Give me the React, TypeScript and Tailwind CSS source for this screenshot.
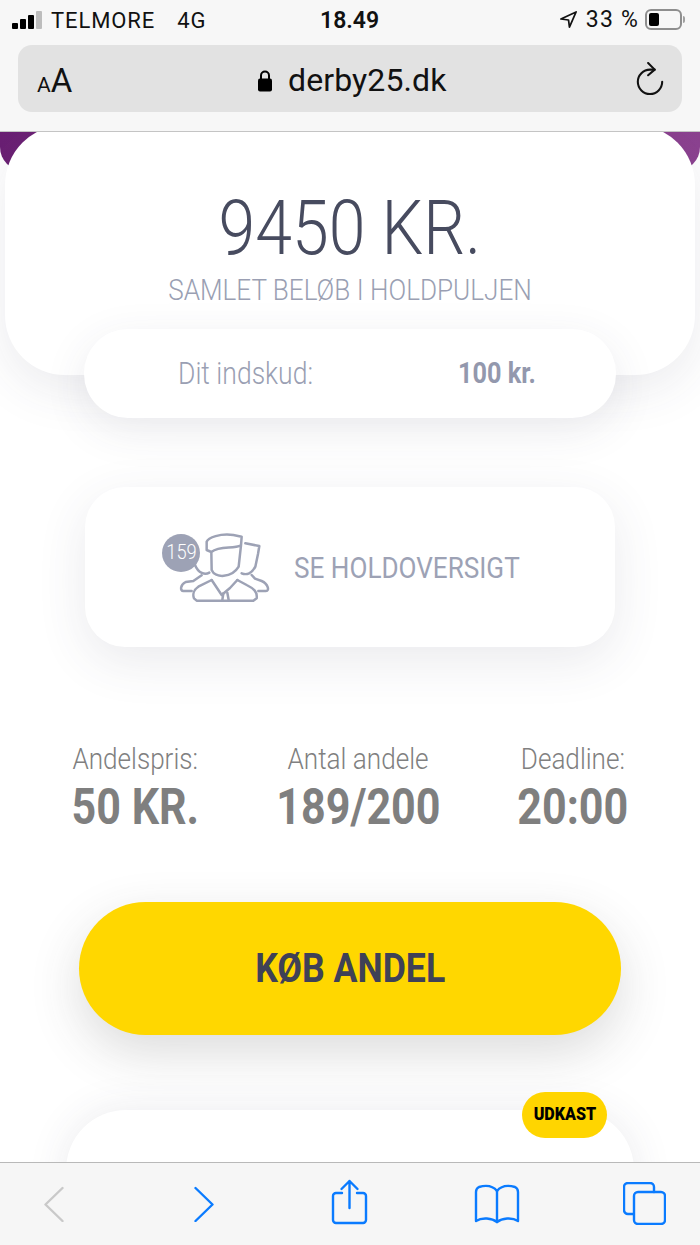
function Cond({ className, children }: { className?: string; children: React.ReactNode }) {
  return <span className={`inline-block whitespace-nowrap origin-center scale-x-[0.87] ${className ?? ""}`}>{children}</span>;
}

function TeamIcon() {
  return (
    <svg viewBox="0 0 480 330" className="w-[160px] h-[110px] shrink-0" fill="none" stroke="#9da2b5" strokeWidth="7.5" strokeLinecap="round" strokeLinejoin="round">
      {/* back right */}
      <path d="M316 100 L358 108 L354 132 L346 170 C336 190 320 196 305 190" />
      <path d="M335 195 L345 206 L365 213 C385 222 389 243 378 243 L355 243" />
      {/* back left */}
      <path d="M165 165 C175 190 195 196 208 188" />
      <path d="M185 196 L160 213 L137 216 C120 225 120 243 130 243 L155 243" />
      {/* front */}
      <path d="M214 126 L200 120 L200 95 C205 82 240 70 280 75 L305 80 L303 106 L296 170 C275 205 225 205 215 180 L214 126 C240 106 280 118 303 106" />
      <path d="M215 210 L175 230 C160 240 158 255 162 265 L170 272 L340 272 L350 265 C353 245 340 235 320 225 L292 210" />
      <path d="M215 210 L245 255 L270 234 L292 210" />
      <path d="M250 250 L247 270 M262 248 L266 270" />
    </svg>
  );
}

function Stat({ label, value }: { label: string; value: string }) {
  return (
    <div className="flex flex-col items-center">
      <Cond className="text-[30px] leading-[34px] font-light text-[#808080]">{label}</Cond>
      <Cond className="text-[49.5px] leading-[56px] mt-[3px] font-bold text-[#7f7f7f]">{value}</Cond>
    </div>
  );
}

export default function App() {
  return (
    <div className="w-[700px] h-[1245px] flex flex-col overflow-hidden bg-white font-['Roboto',sans-serif]">
      {/* safari top */}
      <div className="h-[132px] shrink-0 bg-[#f7f7f7] border-b border-[#c4c4c4] text-[#111]">
        <div className="h-[39px] px-3 flex items-center justify-between relative">
          <div className="flex items-center">
            <div className="flex items-end gap-[2px] h-[18px]">
              <div className="w-[6px] h-[6px] bg-black rounded-[1px]" />
              <div className="w-[6px] h-[10px] bg-black rounded-[1px]" />
              <div className="w-[6px] h-[14px] bg-black rounded-[1px]" />
              <div className="w-[6px] h-[18px] bg-[#bdbdbd] rounded-[1px]" />
            </div>
            <span className="ml-[9px] mt-[1px] text-[22px] tracking-[0.9px]">TELMORE</span>
            <span className="ml-[22px] mt-[1px] text-[22px] tracking-[1px]">4G</span>
          </div>
          <span className="absolute left-[320px] top-[4px] text-[23px] font-semibold">18.49</span>
          <div className="flex items-center pr-[3px]">
            <svg viewBox="0 0 20 20" className="w-[19px] h-[19px]" fill="none" stroke="#111" strokeWidth="1.8" strokeLinejoin="round">
              <path d="M18 2 L2 9.5 L10 10.5 L11 18 Z" />
            </svg>
            <span className="ml-[8px] mt-[2px] text-[23px] tracking-[1.2px]">33 %</span>
            <div className="ml-[6px] w-[37px] h-[21px] border-2 border-[#8e8e8e] rounded-[6px] p-[2px]">
              <div className="w-[10px] h-full bg-black rounded-[2px]" />
            </div>
            <div className="ml-[1px] w-[2px] h-[7px] bg-[#a0a0a0] rounded-r" />
          </div>
        </div>
        <div className="mx-[18px] mt-[6px] h-[67px] bg-[#e2e2e2] rounded-[14px] flex items-center justify-between pl-[19px] pr-[17px] relative">
          <div className="flex items-baseline mt-[3px]">
            <span className="text-[21px] leading-none">A</span>
            <span className="text-[33px] leading-none">A</span>
          </div>
          <div className="absolute left-[239px] top-[15px] flex items-center gap-[15px]">
            <svg viewBox="0 0 16 24" className="w-[16px] h-[25px]" fill="none">
              <path d="M4 11 V7 a4 4 0 0 1 8 0 V11" stroke="#000" strokeWidth="2" />
              <rect x="1" y="10" width="14" height="13" rx="2" fill="#000" />
            </svg>
            <span className="text-[32px] leading-[40px] tracking-[0.1px]">derby25.dk</span>
          </div>
          <svg viewBox="0 0 32 36" className="w-[30px] h-[34px]" fill="none" stroke="#111" strokeWidth="2.2" strokeLinecap="round" strokeLinejoin="round">
            <path d="M21 8 L16 8 A13 13 0 1 0 29 21" />
            <path d="M14 1 L21 8 L14 14" />
          </svg>
        </div>
      </div>

      {/* page */}
      <div className="flex-1 min-h-0 overflow-hidden flex flex-col items-center">
        <div className="w-full h-[39px] shrink-0 bg-gradient-to-r from-[#6a1f73] to-[#8c4290] rounded-b-[24px]" />
        <div className="w-[690px] -mt-[46px] shrink-0 h-[250px] bg-white rounded-[60px] shadow-[0_14px_50px_rgba(60,60,90,0.1)] flex flex-col items-center pt-[55px] relative">
          <Cond className="text-[76px] leading-[96px] font-light text-[#474b5f]">9450 KR.</Cond>
          <Cond className="text-[30px] leading-[34px] font-light text-[#9a9fb3] -mt-[3px]">SAMLET BELØB I HOLDPULJEN</Cond>
        </div>
        <div className="w-[532px] h-[89px] -mt-[46px] shrink-0 bg-white rounded-[44px] shadow-[0_12px_44px_rgba(60,60,90,0.1)] relative flex items-center">
          <Cond className="absolute left-[94px] origin-left text-[30.5px] font-light text-[#9a9fb3]">Dit indskud:</Cond>
          <Cond className="absolute left-[374px] origin-left text-[29px] font-bold text-[#9398ad]">100 kr.</Cond>
        </div>
        <div className="w-[530px] h-[160px] mt-[69px] shrink-0 bg-white rounded-[40px] shadow-[0_14px_50px_rgba(60,60,90,0.11)] flex items-center pl-[55px]">
          <div className="relative -mt-[4px] shrink-0">
            <TeamIcon />
            <div className="absolute left-[22px] top-[24px] w-[38px] h-[38px] rounded-full bg-[#9da2b5] text-white flex items-center justify-center">
              <Cond className="text-[21px] font-light">159</Cond>
            </div>
          </div>
          <Cond className="-ml-[6px] text-[30px] text-[#9da2b5] origin-left">SE HOLDOVERSIGT</Cond>
        </div>
        <div className="w-full h-[90px] mt-[95px] shrink-0 grid grid-cols-[271px_174px_1fr]">
          <Stat label="Andelspris:" value="50 KR." />
          <Stat label="Antal andele" value="189/200" />
          <Stat label="Deadline:" value="20:00" />
        </div>
        <div className="w-[542px] h-[133px] mt-[70px] shrink-0 bg-[#ffd700] rounded-[67px] shadow-[0_18px_50px_rgba(60,60,60,0.18)] flex items-center justify-center">
          <Cond className="text-[41px] font-bold text-[#3f4156]">KØB ANDEL</Cond>
        </div>
        <div className="w-[568px] h-[140px] mt-[75px] shrink-0 bg-white rounded-[60px] shadow-[0_0_40px_rgba(60,60,90,0.1)] relative">
          <div className="absolute left-[456px] -top-[18px] w-[85px] h-[46px] rounded-[23px] bg-[#ffd500] flex items-center justify-center">
            <Cond className="text-[18.5px] font-black text-black">UDKAST</Cond>
          </div>
        </div>
      </div>

      {/* safari bottom */}
      <div className="h-[83px] shrink-0 bg-[#f6f6f6] border-t border-[#b9b9b9] relative z-10 flex items-start pl-[44px] pt-[16px]">
        <svg viewBox="0 0 20 36" className="w-[20px] h-[36px] mt-[7px]" fill="none" stroke="#c9c9c9" strokeWidth="2.4" strokeLinecap="round" strokeLinejoin="round">
          <path d="M18.5 2 L1.5 18.5 L18.5 35" />
        </svg>
        <svg viewBox="0 0 20 36" className="w-[20px] h-[36px] mt-[7px] ml-[130px]" fill="none" stroke="#0a7bff" strokeWidth="2.4" strokeLinecap="round" strokeLinejoin="round">
          <path d="M1.5 2 L18.5 18.5 L1.5 35" />
        </svg>
        <svg viewBox="0 0 37 46" className="w-[37px] h-[46px] ml-[117px]" fill="none" stroke="#0a7bff" strokeWidth="2.4" strokeLinecap="round" strokeLinejoin="round">
          <path d="M11 14 H5 a3 3 0 0 0 -3 3 V41 a3 3 0 0 0 3 3 H32 a3 3 0 0 0 3 -3 V17 a3 3 0 0 0 -3 -3 H26" />
          <path d="M18.5 29 V2 M10.5 10 L18.5 2 L26.5 10" />
        </svg>
        <svg viewBox="0 0 46 40" className="w-[46px] h-[40px] mt-[5px] ml-[106px]" fill="none" stroke="#0a7bff" strokeWidth="2.4" strokeLinecap="round" strokeLinejoin="round">
          <path d="M23 7 C19 2 12 1 5 3 C3 4 2 5 2 8 V37 C8 33 18 34 23 38 C28 34 38 33 44 37 V8 C44 5 43 4 41 3 C34 1 27 2 23 7 Z" />
          <path d="M23 7 V38" />
        </svg>
        <svg viewBox="0 0 43 43" className="w-[43px] h-[43px] mt-[3px] ml-[103px]" fill="none" stroke="#0a7bff" strokeWidth="2.4" strokeLinecap="round" strokeLinejoin="round">
          <path d="M10 32 H5 a4 4 0 0 1 -4 -4 V5 a4 4 0 0 1 4 -4 H27 a4 4 0 0 1 4 4 V10" />
          <rect x="11" y="10" width="31" height="32" rx="4" />
        </svg>
      </div>
    </div>
  );
}
